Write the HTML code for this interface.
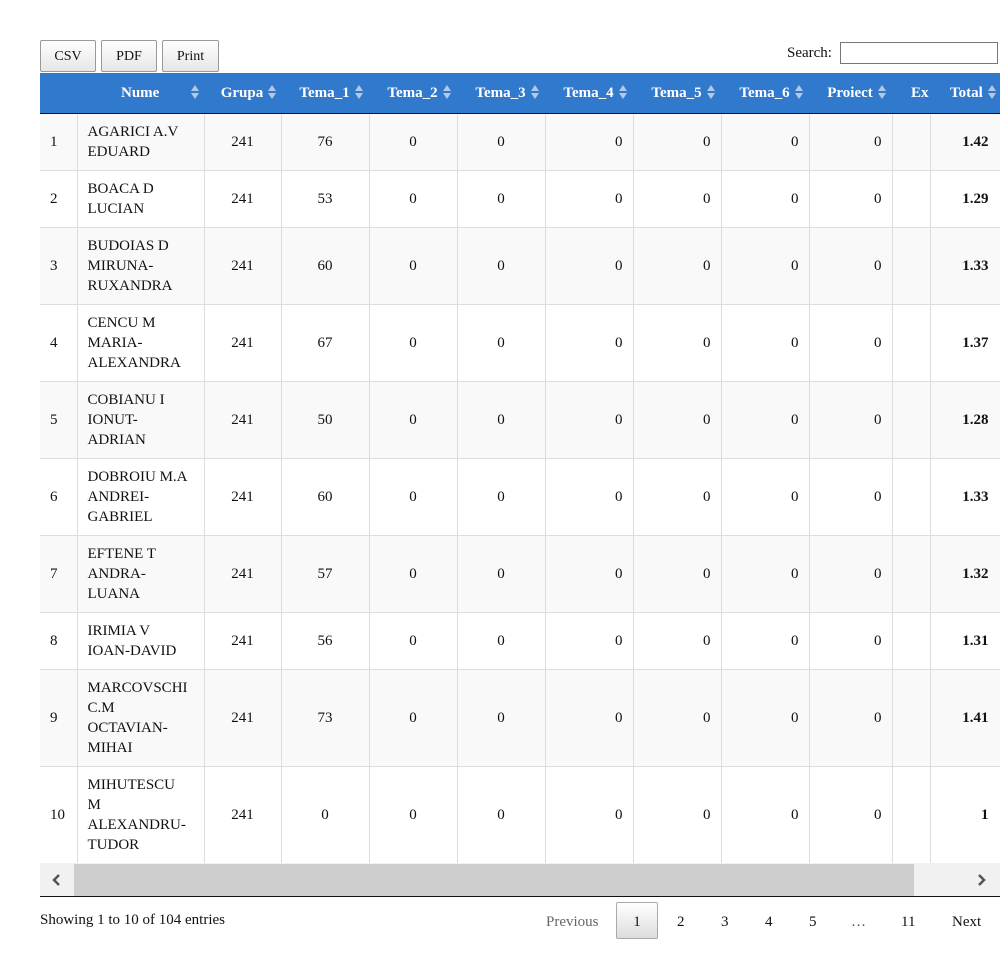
<!DOCTYPE html>
<html><head><style>
body{margin:0;background:#fff;font-family:"Liberation Serif",serif;font-size:15px;color:#111;}
.btn{position:absolute;top:40px;border:1px solid #999;border-radius:2px;background:linear-gradient(#fff,#e6e6e6);font-size:14px;line-height:32px;text-align:center;box-sizing:border-box;height:32px}
.wrap{position:absolute;left:40px;top:73px;width:960px;height:790px;overflow:hidden}
table{border-collapse:collapse;table-layout:fixed;width:960px}
th{background:#3179cc;color:#fff;font-weight:bold;height:40px;padding:0 0 0 12px;border-bottom:1px solid #111;white-space:nowrap;font-size:15px;text-align:center;line-height:40px}
td{border:1px solid #ddd;border-top:none;padding:0 10px;line-height:20px;vertical-align:middle;box-sizing:border-box}
td:first-child{border-left:none}
tr.o td{background:#f9f9f9}
.c{text-align:center}.r{text-align:right}
.s{display:inline-block;width:8px;height:14px;position:relative;vertical-align:-2px;margin-left:5px}
.s:before{content:"";position:absolute;left:0;top:0;border:4px solid transparent;border-top:none;border-bottom:6px solid #b4c8e4}
.s:after{content:"";position:absolute;left:0;top:8px;border:4px solid transparent;border-bottom:none;border-top:6px solid #b4c8e4}
.t{text-align:right;padding-right:11px}
.p{position:absolute;top:914px}
</style></head><body>
<div class="btn" style="left:40px;width:56px">CSV</div>
<div class="btn" style="left:101px;width:56px">PDF</div>
<div class="btn" style="left:162px;width:57px">Print</div>
<div style="position:absolute;left:787px;top:45px;font-size:15px">Search:</div>
<div style="position:absolute;left:840px;top:42px;width:158px;height:22px;border:1px solid #777;box-sizing:border-box"></div>
<div class="wrap"><table>
<colgroup><col style="width:37px"><col style="width:127px"><col style="width:77px"><col style="width:88px"><col style="width:88px"><col style="width:88px"><col style="width:88px"><col style="width:88px"><col style="width:88px"><col style="width:83px"><col style="width:38px"><col style="width:70px"></colgroup>
<tr><th></th><th style="text-align:left;padding-left:44px">Nume <span class="s" style="margin-left:28px"></span></th><th>Grupa<span class="s"></span></th><th>Tema_1<span class="s"></span></th><th>Tema_2<span class="s"></span></th><th>Tema_3<span class="s"></span></th><th>Tema_4<span class="s"></span></th><th>Tema_5<span class="s"></span></th><th>Tema_6<span class="s"></span></th><th>Proiect<span class="s"></span></th><th style="text-align:left;padding-left:19px">Ex</th><th style="text-align:left;padding-left:20px">Total<span class="s"></span></th></tr>
<tr class="o" style="height:57px"><td>1</td><td>AGARICI A.V<br>EDUARD</td><td class="c">241</td><td class="c">76</td><td class="c">0</td><td class="c">0</td><td class="r">0</td><td class="r">0</td><td class="r">0</td><td class="r">0</td><td></td><td class="t"><b>1.42</b></td></tr>
<tr style="height:57px"><td>2</td><td>BOACA D<br>LUCIAN</td><td class="c">241</td><td class="c">53</td><td class="c">0</td><td class="c">0</td><td class="r">0</td><td class="r">0</td><td class="r">0</td><td class="r">0</td><td></td><td class="t"><b>1.29</b></td></tr>
<tr class="o" style="height:77px"><td>3</td><td>BUDOIAS D<br>MIRUNA-<br>RUXANDRA</td><td class="c">241</td><td class="c">60</td><td class="c">0</td><td class="c">0</td><td class="r">0</td><td class="r">0</td><td class="r">0</td><td class="r">0</td><td></td><td class="t"><b>1.33</b></td></tr>
<tr style="height:77px"><td>4</td><td>CENCU M<br>MARIA-<br>ALEXANDRA</td><td class="c">241</td><td class="c">67</td><td class="c">0</td><td class="c">0</td><td class="r">0</td><td class="r">0</td><td class="r">0</td><td class="r">0</td><td></td><td class="t"><b>1.37</b></td></tr>
<tr class="o" style="height:77px"><td>5</td><td>COBIANU I<br>IONUT-<br>ADRIAN</td><td class="c">241</td><td class="c">50</td><td class="c">0</td><td class="c">0</td><td class="r">0</td><td class="r">0</td><td class="r">0</td><td class="r">0</td><td></td><td class="t"><b>1.28</b></td></tr>
<tr style="height:77px"><td>6</td><td>DOBROIU M.A<br>ANDREI-<br>GABRIEL</td><td class="c">241</td><td class="c">60</td><td class="c">0</td><td class="c">0</td><td class="r">0</td><td class="r">0</td><td class="r">0</td><td class="r">0</td><td></td><td class="t"><b>1.33</b></td></tr>
<tr class="o" style="height:77px"><td>7</td><td>EFTENE T<br>ANDRA-<br>LUANA</td><td class="c">241</td><td class="c">57</td><td class="c">0</td><td class="c">0</td><td class="r">0</td><td class="r">0</td><td class="r">0</td><td class="r">0</td><td></td><td class="t"><b>1.32</b></td></tr>
<tr style="height:57px"><td>8</td><td>IRIMIA V<br>IOAN-DAVID</td><td class="c">241</td><td class="c">56</td><td class="c">0</td><td class="c">0</td><td class="r">0</td><td class="r">0</td><td class="r">0</td><td class="r">0</td><td></td><td class="t"><b>1.31</b></td></tr>
<tr class="o" style="height:97px"><td>9</td><td>MARCOVSCHI<br>C.M<br>OCTAVIAN-<br>MIHAI</td><td class="c">241</td><td class="c">73</td><td class="c">0</td><td class="c">0</td><td class="r">0</td><td class="r">0</td><td class="r">0</td><td class="r">0</td><td></td><td class="t"><b>1.41</b></td></tr>
<tr style="height:97px"><td>10</td><td>MIHUTESCU<br>M<br>ALEXANDRU-<br>TUDOR</td><td class="c">241</td><td class="c">0</td><td class="c">0</td><td class="c">0</td><td class="r">0</td><td class="r">0</td><td class="r">0</td><td class="r">0</td><td></td><td class="t"><b>1</b></td></tr>
</table></div>
<div style="position:absolute;left:40px;top:863px;width:960px;height:33px;background:#f1f1f1"></div>
<div style="position:absolute;left:74px;top:864px;width:840px;height:32px;background:#cdcdcd"></div>
<svg style="position:absolute;left:50px;top:873px" width="12" height="14"><path d="M9 2 L4 7 L9 12" stroke="#555" stroke-width="2.5" fill="none"/></svg>
<svg style="position:absolute;left:976px;top:873px" width="12" height="14"><path d="M3 2 L8 7 L3 12" stroke="#555" stroke-width="2.5" fill="none"/></svg>
<div style="position:absolute;left:40px;top:896px;width:960px;height:1px;background:#111"></div>
<div style="position:absolute;left:40px;top:912px;font-size:15px">Showing 1 to 10 of 104 entries</div>
<div class="p" style="left:546px;color:#666">Previous</div>
<div style="position:absolute;left:616px;top:902px;width:42px;height:37px;border:1px solid #aaa;border-radius:2px;background:linear-gradient(#fff,#ddd);box-sizing:border-box;text-align:center;line-height:38px">1</div>
<div class="p" style="left:677px">2</div>
<div class="p" style="left:721px">3</div>
<div class="p" style="left:765px">4</div>
<div class="p" style="left:809px">5</div>
<div class="p" style="left:851px;color:#555">…</div>
<div class="p" style="left:901px">11</div>
<div class="p" style="left:952px">Next</div>
</body></html>
